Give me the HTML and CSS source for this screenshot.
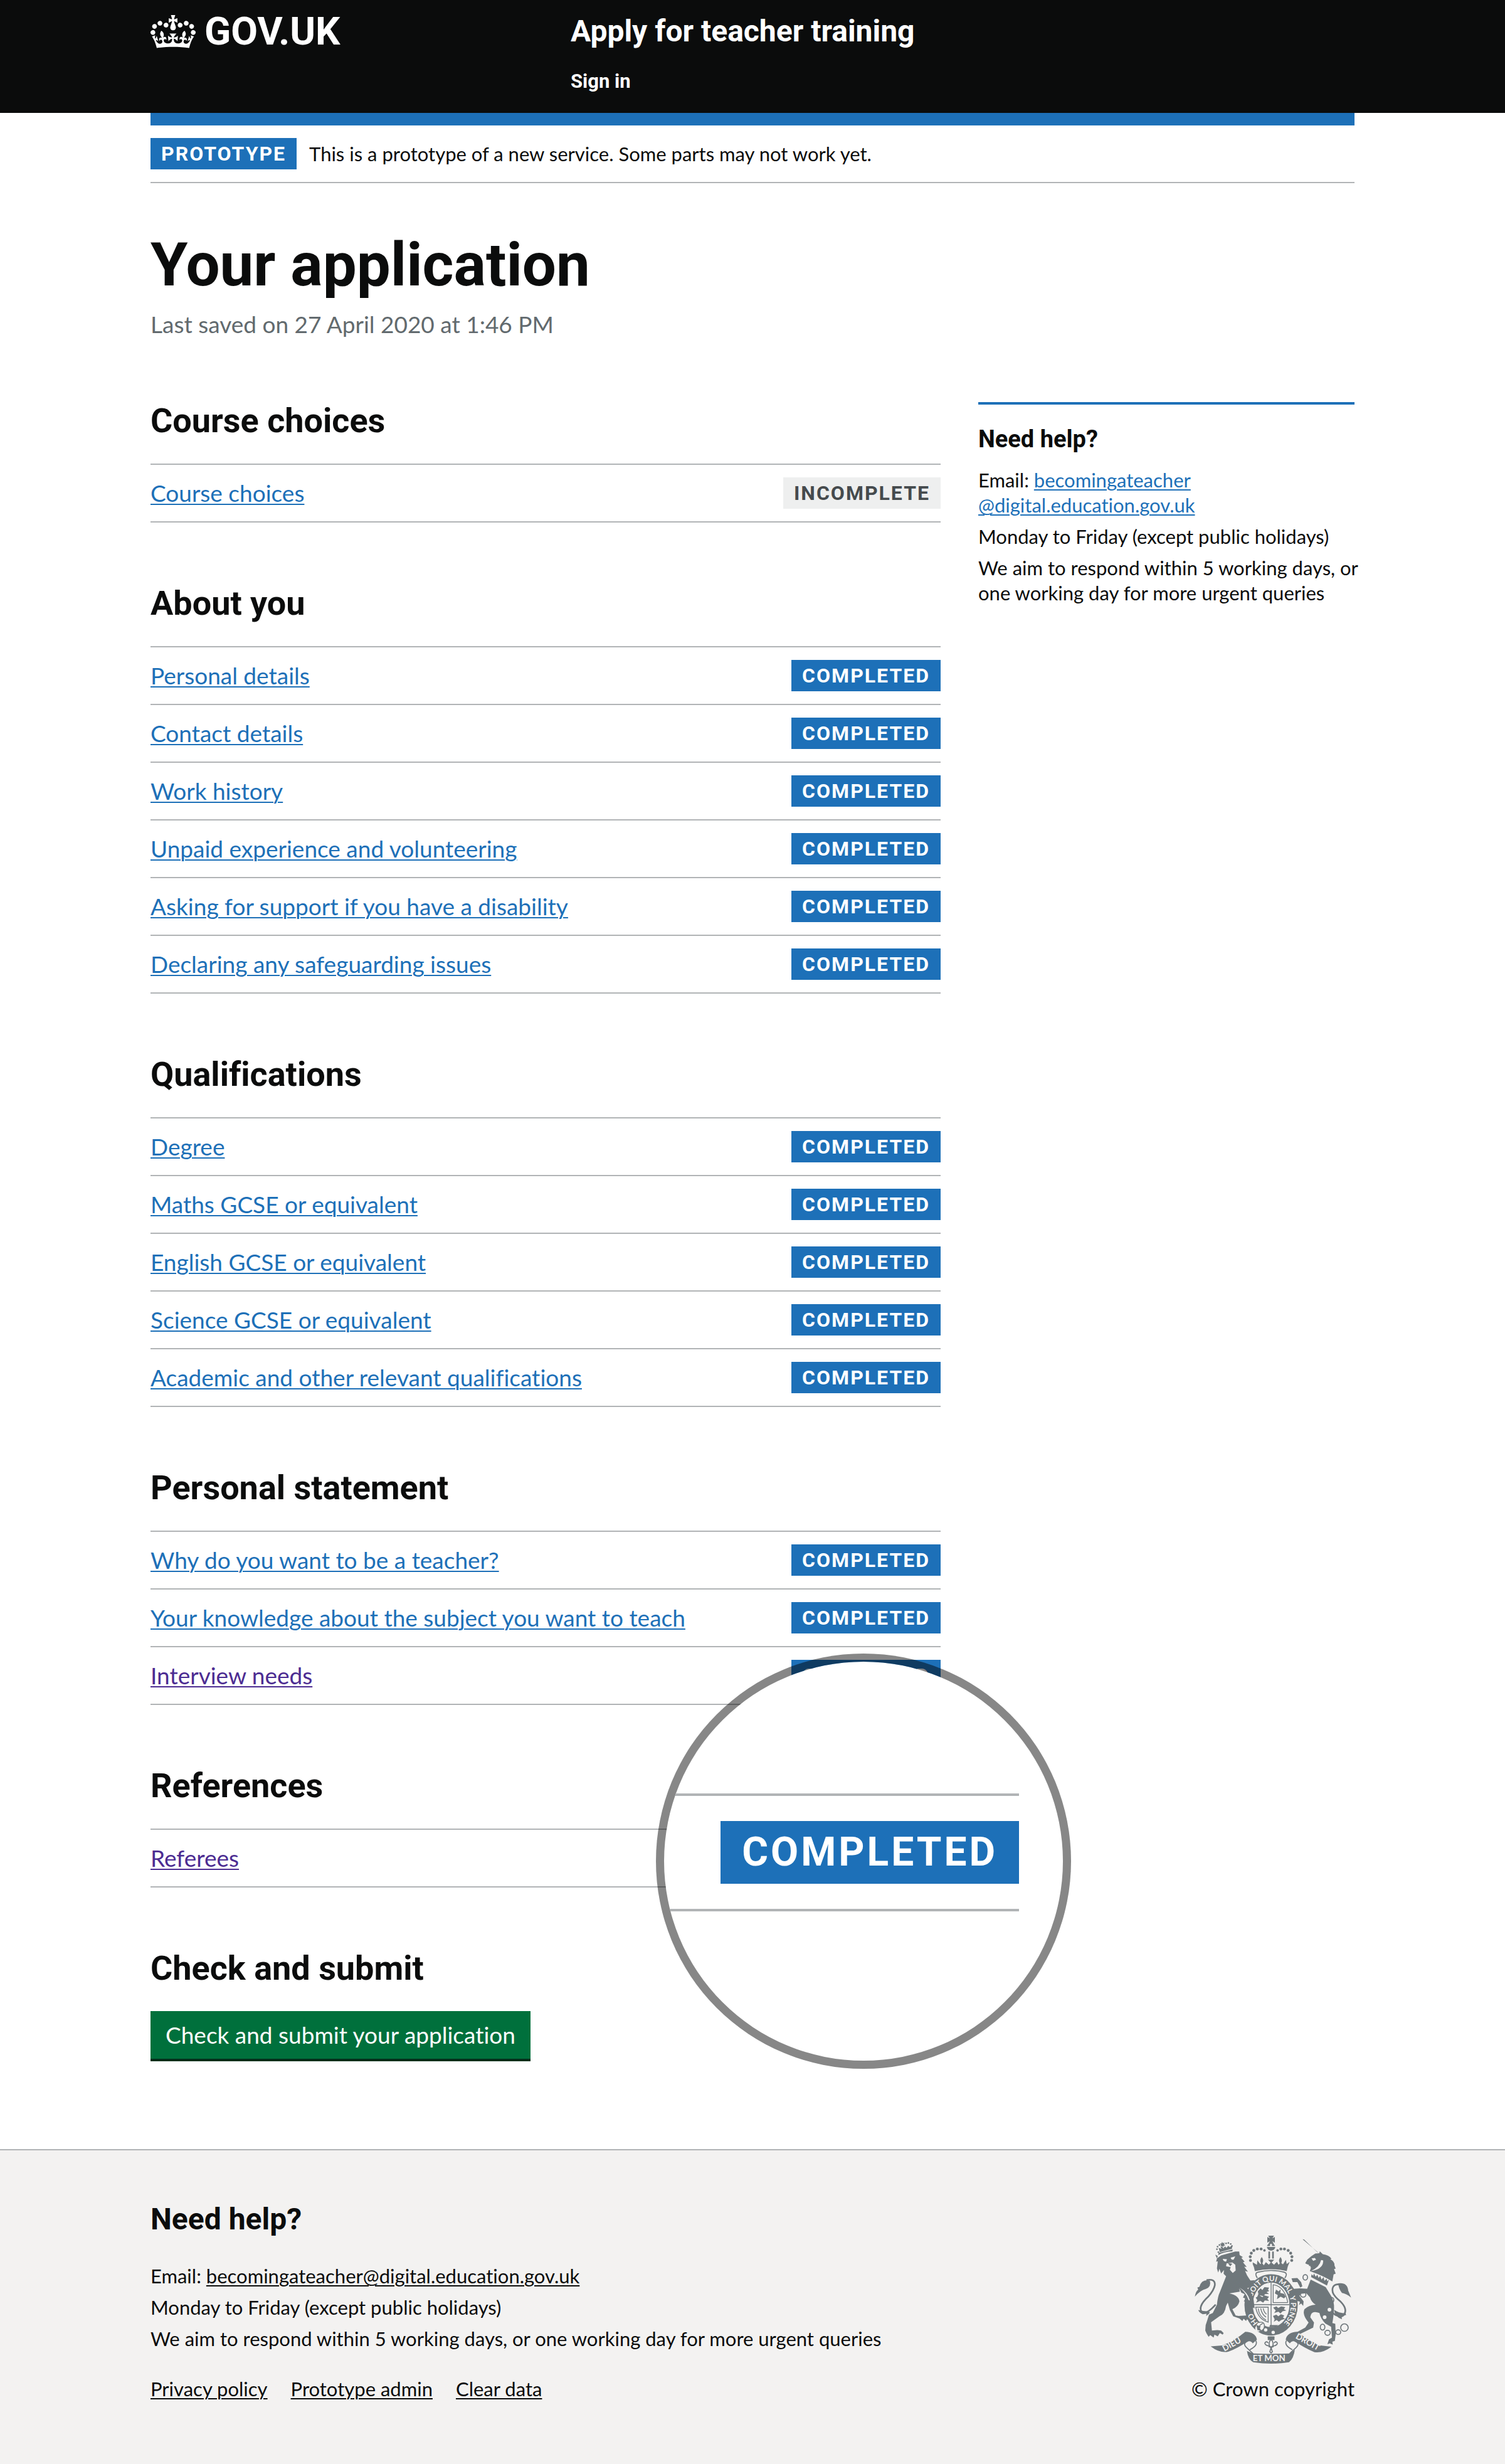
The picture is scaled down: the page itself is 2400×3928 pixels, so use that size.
FILE: index.html
```html
<!DOCTYPE html>
<html lang="en">
<head>
<meta charset="utf-8">
<meta name="viewport" content="width=device-width, initial-scale=1">
<title>Your application - Apply for teacher training - GOV.UK</title>
<link rel="stylesheet" href="styles.css">
</head>
<body>
<header class="header">
  <div class="container header-grid">
    <a class="logo" href="#">
      <svg class="logo-crown" viewBox="0 0 132 97" aria-hidden="true"><path fill="currentColor" fill-rule="evenodd" d="M25 30.2c3.5 1.5 7.7-.2 9.1-3.7 1.5-3.6-.2-7.8-3.9-9.2-3.6-1.4-7.6.3-9.1 3.9-1.4 3.5.3 7.5 3.9 9zM9 39.5c3.6 1.5 7.8-.2 9.2-3.7 1.5-3.6-.2-7.8-3.9-9.1-3.6-1.5-7.6.2-9.1 3.8-1.4 3.5.3 7.5 3.8 9zM4.4 57.2c3.5 1.5 7.7-.2 9.1-3.8 1.5-3.6-.2-7.7-3.9-9.1-3.5-1.5-7.6.3-9.1 3.8-1.4 3.5.3 7.6 3.9 9.1zm38.3-21.4c3.5 1.5 7.7-.2 9.1-3.8 1.5-3.6-.2-7.7-3.9-9.1-3.6-1.5-7.6.3-9.1 3.8-1.3 3.6.4 7.7 3.9 9.1zm64.4-5.6c-3.6 1.5-7.8-.2-9.1-3.7-1.5-3.6.2-7.8 3.8-9.2 3.6-1.4 7.7.3 9.2 3.9 1.3 3.5-.4 7.5-3.9 9zm15.9 9.3c-3.6 1.5-7.7-.2-9.1-3.7-1.5-3.6.2-7.8 3.7-9.1 3.6-1.5 7.7.2 9.2 3.8 1.5 3.5-.3 7.5-3.8 9zm4.7 17.7c-3.6 1.5-7.8-.2-9.2-3.8-1.5-3.6.2-7.7 3.9-9.1 3.6-1.5 7.7.3 9.2 3.8 1.3 3.5-.4 7.6-3.9 9.1zM89.3 35.8c-3.6 1.5-7.8-.2-9.2-3.8-1.4-3.6.2-7.7 3.9-9.1 3.6-1.5 7.7.3 9.2 3.8 1.4 3.6-.3 7.7-3.9 9.1zM69.7 17.7l8.9 4.7V9.3l-8.9 2.8c-.2-.3-.5-.6-.9-.9L72.4 0H59.6l3.5 11.2c-.3.3-.6.5-.9.9l-8.8-2.8v13.1l8.8-4.7c.3.3.6.7.9.9l-5 15.4v.1c-.2.8-.4 1.6-.4 2.4 0 4.1 3.1 7.5 7 8.1h.2c.3 0 .7.1 1 .1.4 0 .7 0 1-.1h.2c4-.6 7.1-4.1 7.1-8.1 0-.8-.1-1.7-.4-2.4V34l-5.1-15.4c.4-.2.7-.6 1-.9zM66 92.8c16.9 0 32.8 1.1 47.1 3.2 4-16.9 8.9-26.7 14-33.5l-9.6-3.4c1 4.9 1.1 7.2 0 10.2-1.5-1.4-3-4.3-4.2-8.7L108.6 76c2.8-2 5-3.2 7.5-3.3-4.4 9.4-10 11.9-13.6 11.2-4.3-.8-6.3-4.6-5.6-7.9 1-4.7 5.7-5.9 8-.5 4.3-8.7-3-11.4-7.6-8.8 7.1-7.2 7.9-13.5 2.1-21.1-8 6.1-8.1 12.3-4.5 20.8-4.7-5.4-12.1-2.5-9.5 6.2 3.4-5.2 7.9-2 7.2 3.1-.6 4.3-6.4 7.8-13.5 7.2-10.3-.9-10.9-8-11.2-13.8 2.5-.5 7.1 1.8 11 7.3L80.2 60c-4.1 4.4-8 5.3-12.3 5.4 1.4-4.4 8-11.6 8-11.6H55.5s6.4 7.2 7.9 11.6c-4.2-.1-8-1-12.3-5.4l1.4 16.4c3.9-5.5 8.5-7.7 10.9-7.3-.3 5.8-.9 12.8-11.1 13.8-7.2.6-12.9-2.9-13.5-7.2-.7-5 3.8-8.3 7.1-3.1 2.7-8.7-4.6-11.6-9.4-6.2 3.7-8.5 3.6-14.7-4.6-20.8-5.8 7.6-5 13.9 2.2 21.1-4.7-2.6-11.9.1-7.7 8.8 2.3-5.5 7.1-4.2 8.1.5.7 3.3-1.3 7.1-5.7 7.9-3.5.7-9-1.8-13.5-11.2 2.5.1 4.7 1.3 7.5 3.3l-4.7-15.4c-1.2 4.4-2.7 7.2-4.3 8.7-1.1-3-.9-5.3 0-10.2l-9.5 3.4c5 6.9 9.9 16.7 14 33.5 14.8-2.1 30.8-3.2 47.7-3.2z"/></svg>
      <span>GOV.UK</span>
    </a>
    <div class="header-content">
      <a class="service-name" href="#">Apply for teacher training</a>
      <nav><a class="header-link" href="#">Sign in</a></nav>
    </div>
  </div>
</header>

<div class="container banner">
  <strong class="tag">PROTOTYPE</strong>
  <span>This is a prototype of a new service. Some parts may not work yet.</span>
</div>

<main class="container main">
  <h1>Your application</h1>
  <p class="saved">Last saved on 27 April 2020 at 1:46 PM</p>

  <div class="columns">
    <div class="sections">
      <section>
        <h2>Course choices</h2>
        <ul class="tasks">
          <li><a href="#">Course choices</a><strong class="tag tag-grey">INCOMPLETE</strong></li>
        </ul>
      </section>
      <section>
        <h2>About you</h2>
        <ul class="tasks">
          <li><a href="#">Personal details</a><strong class="tag">COMPLETED</strong></li>
          <li><a href="#">Contact details</a><strong class="tag">COMPLETED</strong></li>
          <li><a href="#">Work history</a><strong class="tag">COMPLETED</strong></li>
          <li><a href="#">Unpaid experience and volunteering</a><strong class="tag">COMPLETED</strong></li>
          <li><a href="#">Asking for support if you have a disability</a><strong class="tag">COMPLETED</strong></li>
          <li><a href="#">Declaring any safeguarding issues</a><strong class="tag">COMPLETED</strong></li>
        </ul>
      </section>
      <section>
        <h2>Qualifications</h2>
        <ul class="tasks">
          <li><a href="#">Degree</a><strong class="tag">COMPLETED</strong></li>
          <li><a href="#">Maths GCSE or equivalent</a><strong class="tag">COMPLETED</strong></li>
          <li><a href="#">English GCSE or equivalent</a><strong class="tag">COMPLETED</strong></li>
          <li><a href="#">Science GCSE or equivalent</a><strong class="tag">COMPLETED</strong></li>
          <li><a href="#">Academic and other relevant qualifications</a><strong class="tag">COMPLETED</strong></li>
        </ul>
      </section>
      <section>
        <h2>Personal statement</h2>
        <ul class="tasks">
          <li><a href="#">Why do you want to be a teacher?</a><strong class="tag">COMPLETED</strong></li>
          <li><a href="#">Your knowledge about the subject you want to teach</a><strong class="tag">COMPLETED</strong></li>
          <li><a class="visited" href="#">Interview needs</a><strong class="tag">COMPLETED</strong></li>
        </ul>
      </section>
      <section>
        <h2>References</h2>
        <ul class="tasks">
          <li><a class="visited" href="#">Referees</a></li>
        </ul>
        <div class="lens-anchor">
          <div class="lens">
            <div class="lens-row"><strong class="tag tag-large">COMPLETED</strong></div>
          </div>
        </div>
      </section>
      <section>
        <h2>Check and submit</h2>
        <button class="button" type="button">Check and submit your application</button>
      </section>
    </div>

    <aside class="help">
      <h3>Need help?</h3>
      <p>Email: <a href="#">becomingateacher<br>@digital.education.gov.uk</a></p>
      <p>Monday to Friday (except public holidays)</p>
      <p>We aim to respond within 5 working days, or<br>one working day for more urgent queries</p>
    </aside>
  </div>
</main>

<footer class="footer">
  <div class="container footer-row">
    <div class="footer-help">
      <h2>Need help?</h2>
      <p>Email: <a href="#">becomingateacher@digital.education.gov.uk</a></p>
      <p>Monday to Friday (except public holidays)</p>
      <p>We aim to respond within 5 working days, or one working day for more urgent queries</p>
      <nav class="footer-links">
        <a href="#">Privacy policy</a>
        <a href="#">Prototype admin</a>
        <a href="#">Clear data</a>
      </nav>
    </div>
    <a class="copyright" href="#">
      <svg class="crest" viewBox="132 131 750 614" aria-hidden="true">
        <defs>
          <path id="garter" d="M498 577A95 114 0 0 1 498 349A95 114 0 0 1 498 577"/>
        </defs>
        <!-- royal crown -->
        <g class="ink">
          <path d="M484 131h28l-8 13 12-7v28l-12-8 7 14h-26l7-14-12 8v-28l12 7zM478 181q5-12 15-14v14zM502 167q10 2 15 14h-15zM478 185h40q-1 15-20 18-19-3-20-18zM485 207h8v34h-8zM503 207h8v34h-8z"/>
          <path d="M410 259l20 12 2-22 14 18 8-6 9 12 10-15 14 12 11-12 14 12 14-13 8 14 9-12 12 10 14-22 4 20 14-10q-10 20-14 44-75-18-153 0-3-20-10-32z"/>
          <path d="M453 233q14 18 0 34-14-16 0-34zM543 233q14 18 0 34-14-16 0-34zM498 262l-15-16h30z"/>
          <circle cx="399" cy="250" r="7"/><circle cx="398" cy="232" r="7"/><circle cx="403" cy="215" r="7"/><circle cx="415" cy="202" r="7"/><circle cx="432" cy="195" r="7"/><circle cx="450" cy="195" r="7"/><circle cx="466" cy="202" r="6"/>
          <circle cx="597" cy="250" r="7"/><circle cx="598" cy="232" r="7"/><circle cx="592" cy="215" r="7"/><circle cx="580" cy="202" r="7"/><circle cx="562" cy="195" r="7"/><circle cx="545" cy="195" r="7"/><circle cx="529" cy="202" r="6"/>
        </g>
        <path class="line" d="M432 334q-16-24 4-28 62-16 124 0 20 6 4 28"/>
        <!-- garter and shield -->
        <ellipse class="garter" cx="498" cy="463" rx="108" ry="127"/>
        <g class="line thin">
          <path d="M498 356v212M411 462h175M508 366v86h70M508 366q56 10 70 86"/>
          <path d="M424 474h60v72q-50-14-60-72zM436 480q4 38 38 56M448 480q6 30 26 42M460 480q4 20 16 28"/>
        </g>
        <path class="ink" d="M434 398l14-14 8 8 10-14 22 2-5 12 7 4-14 6 12 8-20 2-5 10-16-4-15 5 5-12zM424 428l18-10 14 8 10-8 22 6-8 10 8 10-20-2-8 10-14-8-20 8 6-12zM508 476l16-6 8 8 14-8 20 4-7 10 12 6-18 4-10 10-10-8-20 6 7-12zM507 516l16-6 10 8 12-10 16 6-6 10 10 6-18 6-12 8-10-8-14 8 4-12zM522 390l12 8 10-10-2 18 18 4 8 14-8 8-16-8-18 12 4-20-14-8zM492 560h40l-12 10h-30z"/>
        <path class="paper" d="M436 548q30-8 30 16 0 22-24 26-22 4-20-18z"/>
        <path class="line thin" d="M436 548q30-8 30 16 0 22-24 26M458 552q-28 14-12 32"/>
        <path class="ink" d="M428 560l20 6-4 10 8 12-20-4z"/>
        <circle class="paper" cx="472" cy="583" r="8"/><circle class="paper" cx="508" cy="595" r="8"/>
        <g class="motto ring">
          <text><textPath href="#garter" startOffset="70">HO</textPath></text>
          <text><textPath href="#garter" startOffset="204">SOIT QUI MAL</textPath></text>
          <text><textPath href="#garter" startOffset="452">Y PENSE</textPath></text>
        </g>
        <!-- lion -->
        <path class="ink" d="M238 240l20-14 68-19h19l2 17 16 10-8 3 16 19-8 3 18 22-12-1 18 24-14-4 10 22q14 22 16 24l22-1-26 34-12 4q18 15 30 47l6 50-16-8-10 8-8-16-8 2 2-18-12-2 8-14-12-4 8-16-16-8-10-20 3 16-50 8q44 10 48 38-6 26-34 38l16 30 14 2 38-2 16 14 8 16-10-4-12-8-4 8-12-10-6 10-14-12-30-10-16-30-10-36-8 16q-6 40-32 50l-40 28 4 40 26-2 18 2 12 12-4 8-14-8-10 16-16-8-4 14-16-12-8 8-10-16-6-14 2-26 8-24 8-26 18-8 20-40q4-40 14-60l30-76-12-12 2-18-14 16-8-22-6 18-6-20 4-34-8 2 8-28-12-6z"/>
        <path class="paper" d="M266 242l20 2-4 12q-14-2-16-14zM304 236l22-6-8 16q-12 2-14-10zM284 264l28-4 14 10 2 28-14 12-14-16 4-12-22-4z"/>
        <path class="paper" d="M346 380q40 22 50 62l-6-2q-12-36-44-60z"/>
        <path class="ink" d="M290 262l22 4-10 12zM244 224q28-16 68-18l2-9-68 17zM246 190l14 4 2-10 8 8 6-10 8 8 8-10 8 6 12-10-2 18-58 16z"/>
        <path class="ink" d="M262 160l5 7 8-3-3 8 6 6-8 1-2 8-5-6-8 2 3-7-5-7 8-1z"/>
        <g class="ink"><circle cx="238" cy="196" r="4"/><circle cx="241" cy="184" r="4"/><circle cx="250" cy="176" r="4"/><circle cx="260" cy="188" r="4"/><circle cx="282" cy="168" r="4"/><circle cx="293" cy="166" r="4"/><circle cx="304" cy="171" r="4"/><circle cx="310" cy="181" r="4"/><circle cx="245" cy="210" r="4"/></g>
        <path class="line tail" d="M188 344q42-8 40 24-4 24-32 56-54 50-28 76 20 10 64-38"/>
        <path class="ink" d="M132 424q4-26 16-34l-4-10 10-4q10-38 50-30 8 30-18 40-30 8-54 38zM148 488l24 4 18 2 14 4-4 8-14 10 2-10-18 2q-16-6-22-20z"/>
        <!-- unicorn -->
        <path class="ink" d="M649 148l80 68 3-10 14 14q30 4 42 22l-6 1q22 14 20 30l6 16-8 2 8 22-10 4-6 34q-40-26-108-50l6-18q-14 0-10-12-16-4-18-8l10-18 20-16 18-12 18-2-12-8-60-58z"/>
        <path class="paper" d="M692 240l16-2 6 8-14 6zM664 272l24 6-4 8-18 0zM748 250q2 36-44 48l-14 2q40-16 48-52z"/>
        <path class="paper" d="M686 310l104 42-20 28-86-46z"/>
        <path class="ink" d="M692 316l8 8 4-12 8 16 8-10 6 16 8-10 6 18 10-12 4 18 10-10 4 12 8-8-10 28-76-40z"/>
        <path class="ink" d="M688 342l72 36 26 42q16 30 14 60-2 40-8 70l14 4 2 52-4 30-12 4 2 14-14-6-12 4 8-24 14-8-4-52-28-16q-22-22-28-50-40-16-44 20l18 26-4 24-66 32-12 12-34-2 8-12 26-8 40-22 16-24q-32-38-20-64 20-20 54-22-20-10-28-36l-20-22z"/>
        <path class="ink" d="M596 336l28-2 18 20 6 20-10 6-14-26-22 0zM606 386l30-2 40 2 8 18-24 4-20 2-6 10 20 26-2 22-10-12-10 8 4-16-14-4-8-26z"/>
        <g class="chain"><ellipse cx="662" cy="331" rx="11" ry="13"/><ellipse cx="652" cy="414" rx="13" ry="12"/><ellipse cx="787" cy="440" rx="12" ry="13"/><ellipse cx="745" cy="570" rx="11" ry="14"/><ellipse cx="769" cy="597" rx="13" ry="12"/><ellipse cx="820" cy="594" rx="12" ry="11"/><circle cx="850" cy="572" r="18"/></g>
        <circle class="paper" cx="778" cy="486" r="9"/><circle class="paper" cx="755" cy="522" r="9"/>
        <path class="line tail" d="M834 364q-50-4-40 40 6 18 38 44 34 34 16 62-12 16-40 2l-20-14"/>
        <path class="ink" d="M820 360q44-6 48 34l14 34q-22-18-44-22-16-20-18-46zM800 486q20 16 56 18l2 8-22 4 2 16q-36-12-38-46z"/>
        <!-- ribbon -->
        <path class="ink" d="M208 662l56-4q60-24 110-66 50 2 56 38l-20 18q-8-14-24-10-50 34-94 50-40 8-84-26zM788 664l-54-6q-60-26-110-66-50 2-56 38l20 18q8-14 24-10 50 34 94 52 40 6 82-26zM382 684l28 12q90 4 178 0l24-18q-6 44-28 60-84 14-172 0-24-12-30-54z"/>
        <path class="line" d="M388 636q-30 12-8 32 20 18 32 30M424 634q14 22-28 44M610 636q30 12 8 32-20 18-32 30M572 634q-14 22 28 44"/>
        <path class="line" d="M482 620h32M498 628q20 22 0 44-20-22 0-44zM492 660q-24 0-24-14 8-12 16 0M504 660q24 0 24-14-8-12-16 0M486 664h24M498 668l-6 20 6 6 6-6z"/>
        <path class="ink" d="M482 614h32v18h-32z"/>
        <g class="motto">
          <text transform="rotate(-29 275 683)" x="272" y="686">DIEU</text>
          <text x="410" y="733">ET MON</text>
          <text transform="rotate(29 615 625)" x="612" y="624">DROIT</text>
        </g>
      </svg>
      <span>© Crown copyright</span>
    </a>
  </div>
</footer>
</body>
</html>
```
FILE: styles.css
```css
:root {
  --ink: #0b0c0c;
  --blue: #1d70b8;
  --rule: #b1b4b6;
  --crest: #6f777b;
  --paper: #f3f2f1;
  --display: Roboto, "Liberation Sans", Arial, sans-serif;
  --text: Lato, "Liberation Sans", Arial, sans-serif;
}

* { box-sizing: border-box; }

body {
  margin: 0;
  background: #fff;
  color: var(--ink);
  font-family: var(--text);
  font-size: 31px;
  line-height: 40px;
  font-variant-ligatures: none;
}

h1, h2, h3, p, ul { margin: 0; padding: 0; }
h1, h2, h3, .header, .tag { font-family: var(--display); }

.container { width: 80%; margin: 0 auto; }

/* Header */
.header { background: var(--ink); color: #fff; }
.header a { color: #fff; text-decoration: none; font-weight: 700; }
.header-grid {
  display: grid;
  grid-template-columns: calc(33.33% + 30px) 1fr;
  padding: 20px 0 30px;
}
.logo {
  display: flex;
  align-items: center;
  align-self: start;
  gap: 14px;
  font-size: 62px;
  line-height: 60px;
}
.logo-crown { width: 72px; height: 53px; }
.header-content { display: flex; flex-direction: column; gap: 30px; }
.service-name { font-size: 48px; line-height: 60px; }

/* Phase banner */
.banner {
  display: flex;
  align-items: center;
  gap: 20px;
  padding: 20px 0;
  border-top: 20px solid var(--blue);
  border-bottom: 2px solid var(--rule);
}
.tag {
  flex: none;
  padding: 5px 17px;
  background: var(--blue);
  color: #fff;
  font-size: 32px;
  line-height: 40px;
  font-weight: 700;
  letter-spacing: 2px;
}
.tag-grey { background: #eeefef; color: #454a4d; }
.tag-large {
  padding: 10px 34px;
  font-size: 64px;
  line-height: 80px;
  letter-spacing: 4px;
}

/* Main */
.main { padding: 80px 0 140px; }
h1 { font-size: 96px; line-height: 100px; }
.saved {
  margin-top: 20px;
  color: #626a6e;
  font-size: 37px;
  line-height: 50px;
}
.columns {
  display: grid;
  grid-template-columns: minmax(0, 21fr) minmax(0, 10fr);
  align-items: start;
  gap: 60px;
  margin-top: 99px;
}
.sections { display: flex; flex-direction: column; gap: 99px; }
.sections h2 { margin-bottom: 38px; font-size: 54px; line-height: 60px; }

a {
  color: var(--blue);
  text-decoration-thickness: 2px;
  text-underline-offset: 3px;
}
a.visited { color: #4c2c92; }

.tasks {
  list-style: none;
  border-bottom: 2px solid var(--rule);
  font-size: 37px;
  line-height: 50px;
}
.tasks li {
  display: flex;
  justify-content: space-between;
  align-items: center;
  padding: 20px 0;
  border-top: 2px solid var(--rule);
}

/* Magnifying lens laid over the end of the referees row */
.lens-anchor { position: relative; }
.lens {
  position: absolute;
  right: -208px;
  bottom: -289px;
  width: 662px;
  height: 662px;
  padding: 210px 70px 0 0;
  overflow: hidden;
  border: 13px solid rgba(0, 0, 0, 0.47);
  border-radius: 50%;
  background: #fff padding-box;
}
.lens-row {
  display: flex;
  justify-content: flex-end;
  padding: 40px 0;
  border-top: 4px solid var(--rule);
  border-bottom: 4px solid var(--rule);
}

.button {
  display: block;
  margin-bottom: 4px;
  padding: 13px 24px;
  border: 0;
  background: #00703c;
  box-shadow: 0 4px 0 #002d18;
  color: #fff;
  font: inherit;
  font-variant-ligatures: none;
  font-size: 37px;
  line-height: 50px;
}

.help {
  display: flex;
  flex-direction: column;
  gap: 10px;
  padding-top: 30px;
  border-top: 4px solid var(--blue);
  white-space: nowrap;
}
.help h3 { margin-bottom: 10px; font-size: 38px; line-height: 50px; }

/* Footer */
.footer {
  padding: 80px 0 100px;
  border-top: 2px solid var(--rule);
  background: var(--paper);
}
.footer a { color: var(--ink); }
.footer-row {
  display: flex;
  justify-content: space-between;
  align-items: flex-end;
}
.footer-help { display: flex; flex-direction: column; gap: 10px; }
.footer-help h2 { margin-bottom: 30px; font-size: 48px; line-height: 60px; }
.footer-links { display: flex; gap: 37px; margin-top: 30px; }
.footer .copyright {
  display: flex;
  flex-direction: column;
  align-items: center;
  gap: 20px;
  text-decoration: none;
}
.crest { width: 250px; height: 204px; }
.ink { fill: var(--crest); }
.paper { fill: var(--paper); }
.line { fill: none; stroke: var(--crest); stroke-width: 5; }
.line.thin { stroke-width: 4; }
.line.tail { stroke-width: 8; }
.garter { fill: none; stroke: var(--crest); stroke-width: 40; }
.chain { fill: none; stroke: var(--crest); stroke-width: 5; }
.motto {
  fill: var(--paper);
  font-family: Lato, sans-serif;
  font-size: 40px;
  font-weight: 700;
}
.motto.ring { font-size: 35px; }
```
